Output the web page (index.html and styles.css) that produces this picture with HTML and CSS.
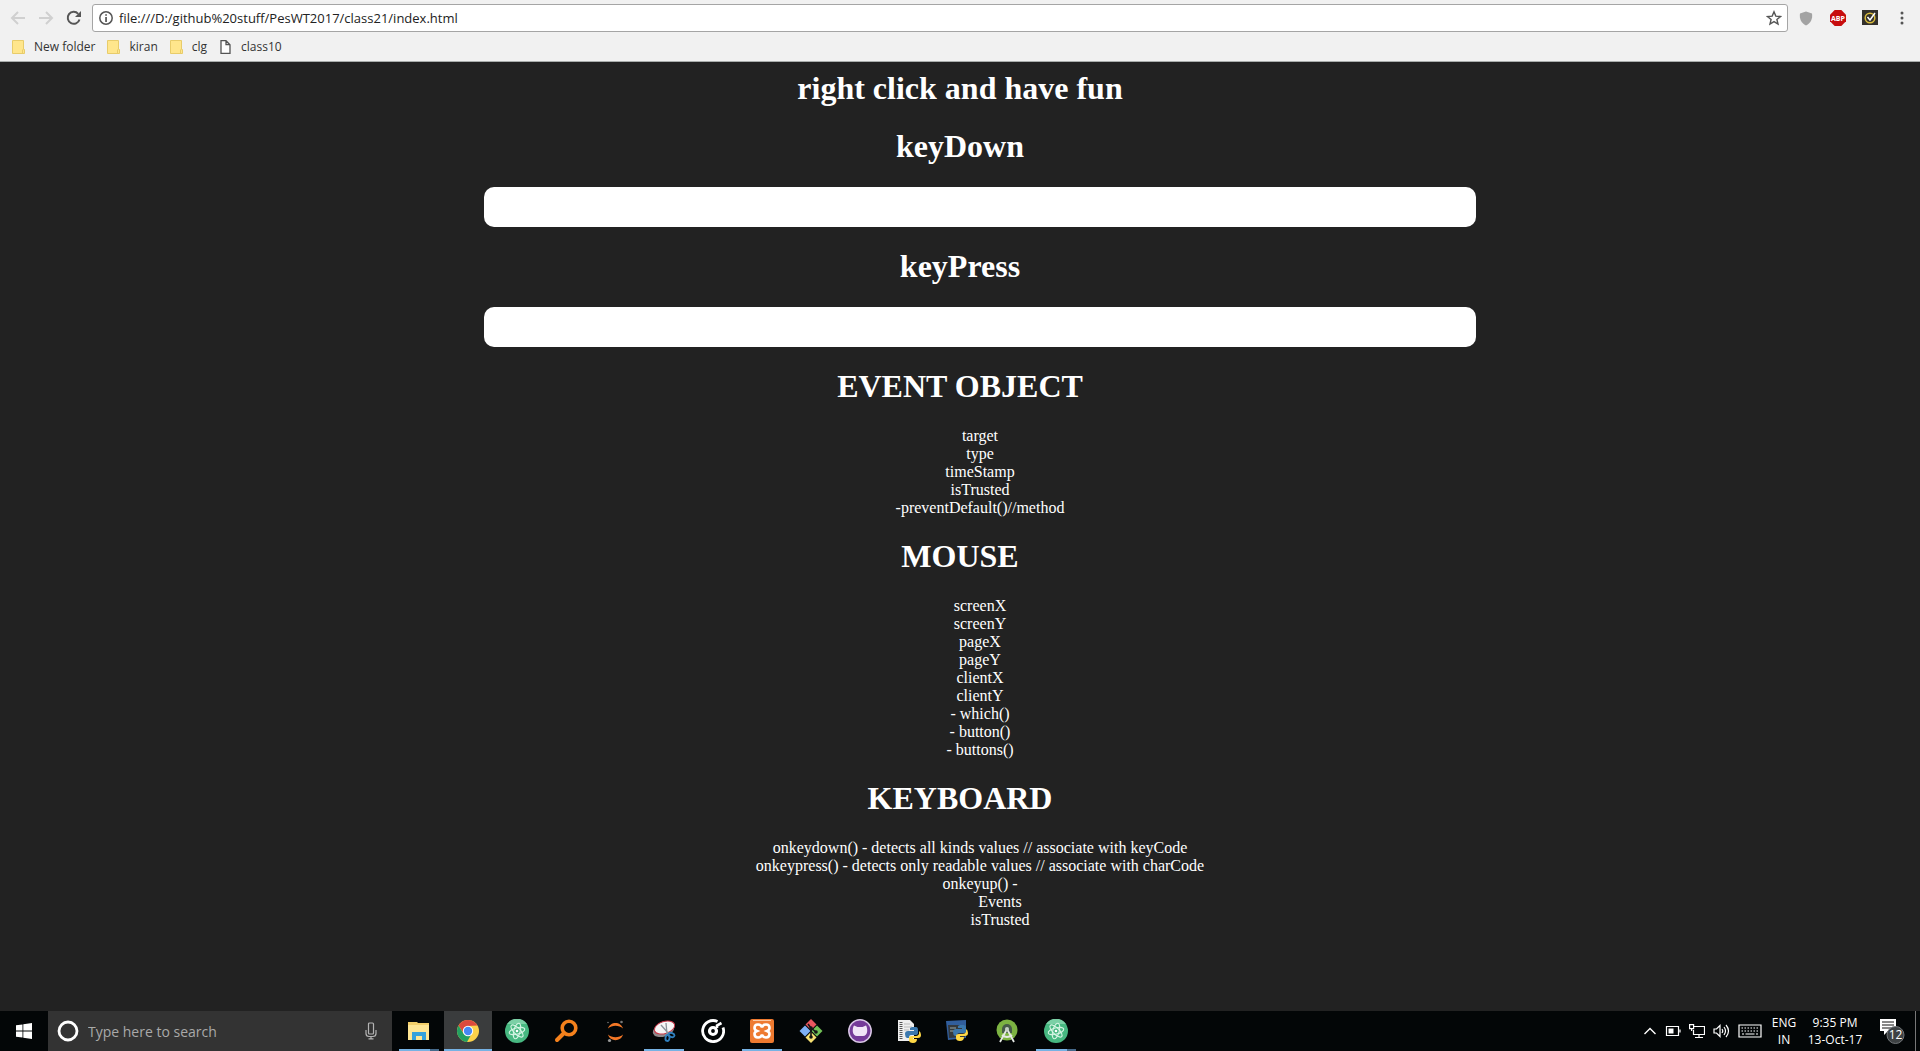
FILE: index.html
```html
<!DOCTYPE html>
<html lang="en">
<head>
<meta charset="utf-8">
<title>class21</title>
<link rel="stylesheet" href="styles.css">
</head>
<body>
<header class="browser">
  <div class="toolbar">
    <button class="nav" aria-label="Back"><svg width="16" height="16" viewBox="0 0 16 16" fill="none" stroke="#d0d0d0" stroke-width="2"><path d="M15 8H3M8 2L2 8l6 6"/></svg></button>
    <button class="nav" aria-label="Forward"><svg width="16" height="16" viewBox="0 0 16 16" fill="none" stroke="#d0d0d0" stroke-width="2"><path d="M1 8h12M8 2l6 6-6 6"/></svg></button>
    <button class="nav" aria-label="Reload"><svg width="16" height="16" viewBox="0 0 16 16"><path d="M13.5 9.5A6 6 0 1 1 12.2 3.8" fill="none" stroke="#555" stroke-width="2"/><path d="M15 1v6H9z" fill="#555"/></svg></button>
    <div class="omnibox">
      <svg width="16" height="16" viewBox="0 0 16 16"><circle cx="8" cy="8" r="6.2" fill="none" stroke="#555" stroke-width="1.5"/><path d="M7.2 7h1.7v5H7.2zM7.2 4.2h1.7v1.6H7.2z" fill="#555"/></svg>
      <input class="url" type="text" aria-label="Address" value="file:///D:/github%20stuff/PesWT2017/class21/index.html">
      <button class="nav" aria-label="Bookmark this page"><svg width="16" height="16" viewBox="0 0 16 16"><path d="M8 1.8l1.8 4.3 4.7.4-3.6 3 1.1 4.6L8 11.600l-4 2.500 1.100-4.600-3.600-3 4.700-.4z" fill="none" stroke="#555" stroke-width="1.400"/></svg></button>
    </div>
    <div class="extensions">
      <button class="nav" aria-label="Shield"><svg width="16" height="16" viewBox="0 0 16 16"><path d="M8 1.500l6 2c.8 5-1 9.500-6 12C3 13 1.200 8.500 2 3.500z" fill="#a3a3a3"/></svg></button>
      <button class="nav" aria-label="Adblock Plus"><svg width="16" height="16" viewBox="0 0 16 16"><path d="M4.700 0h6.600L16 4.700v6.600L11.300 16H4.700L0 11.300V4.700z" fill="#c70d0e"/><text x="8" y="10.500" text-anchor="middle" class="abp">ABP</text></svg></button>
      <button class="nav" aria-label="Norton"><svg width="16" height="16" viewBox="0 0 16 16"><path fill="#33302b" d="M0 0h16v15H0z"/><circle cx="8" cy="8" r="4.800" fill="none" stroke="#d9bc3c" stroke-width="1.500"/><path d="M5.500 7l2.500 3 5-7" fill="none" stroke="#fff" stroke-width="1.500"/></svg></button>
      <button class="nav" aria-label="Menu"><svg width="16" height="16" viewBox="0 0 16 16" fill="#555"><circle cx="8" cy="3" r="1.500"/><circle cx="8" cy="8" r="1.500"/><circle cx="8" cy="13" r="1.500"/></svg></button>
    </div>
  </div>
  <nav class="bookmarks">
    <a href="#"><svg width="13" height="14" viewBox="0 0 13 14"><path d="M.5.500h11v9h1v4H.5z" fill="#ffe68c" stroke="#e8cc6a"/><path d="M10.500 13V9.500" stroke="#e8cc6a"/></svg>New folder</a>
    <a href="#"><svg width="13" height="14" viewBox="0 0 13 14"><path d="M.5.500h11v9h1v4H.5z" fill="#ffe68c" stroke="#e8cc6a"/><path d="M10.500 13V9.500" stroke="#e8cc6a"/></svg>kiran</a>
    <a href="#"><svg width="13" height="14" viewBox="0 0 13 14"><path d="M.5.500h11v9h1v4H.5z" fill="#ffe68c" stroke="#e8cc6a"/><path d="M10.500 13V9.500" stroke="#e8cc6a"/></svg>clg</a>
    <a href="#"><svg width="13" height="14" viewBox="0 0 13 14"><path d="M2 .7h5l4 4v8.600H2zM7 .7v4h4" fill="#fff" stroke="#555" stroke-width="1.300"/></svg>class10</a>
  </nav>
</header>

<main class="page">
  <h1>right click and have fun</h1>
  <h1><label for="down">keyDown</label></h1>
  <div class="field"><input id="down" type="text"></div>
  <h1><label for="press">keyPress</label></h1>
  <div class="field"><input id="press" type="text"></div>
  <h1>EVENT OBJECT</h1>
  <ul>
    <li>target</li>
    <li>type</li>
    <li>timeStamp</li>
    <li>isTrusted</li>
    <li>-preventDefault()//method</li>
  </ul>
  <h1>MOUSE</h1>
  <ul>
    <li>screenX</li>
    <li>screenY</li>
    <li>pageX</li>
    <li>pageY</li>
    <li>clientX</li>
    <li>clientY</li>
    <li>- which()</li>
    <li>- button()</li>
    <li>- buttons()</li>
  </ul>
  <h1>KEYBOARD</h1>
  <ul>
    <li>onkeydown() - detects all kinds values // associate with keyCode</li>
    <li>onkeypress() - detects only readable values // associate with charCode</li>
    <li>onkeyup() -
      <ul>
        <li>Events</li>
        <li>isTrusted</li>
      </ul>
    </li>
  </ul>
</main>

<footer class="taskbar">
  <button class="start" aria-label="Start"><svg width="16" height="16" viewBox="0 0 16 16" fill="#fff"><path d="M0 2.300L6.500 1.400v6.200H0zM7.300 1.300L16 0v7.600H7.300zM0 8.400h6.500v6.200L0 13.700zM7.300 8.400H16V16l-8.700-1.300z"/></svg></button>
  <div class="search">
    <svg width="22" height="22" viewBox="0 0 22 22"><circle cx="11" cy="11" r="9" fill="none" stroke="#fff" stroke-width="2.800"/></svg>
    <input type="text" aria-label="Search" placeholder="Type here to search">
    <svg width="12" height="18" viewBox="0 0 12 18" fill="none" stroke="#b4b4b4" stroke-width="1.200"><rect x="3.500" y="1" width="5" height="11" rx="1"/><path d="M1 8v3.500a3 3 0 0 0 3 3h4a3 3 0 0 0 3-3V8M6 14.500v2.500M3.500 16.800h5"/></svg>
  </div>
  <div class="apps">
    <button class="app open more" aria-label="File Explorer"><svg width="24" height="24" viewBox="0 0 24 24"><path d="M1 3h9l1 1h11v17H1z" fill="#f3cf6a"/><path d="M1 6h21v15H1z" fill="#ffe694"/><path d="M5 13h14v8h-4v-4H9v4H5z" fill="#35a1dc"/></svg></button>
    <button class="app active" aria-label="Chrome"><svg width="24" height="24" viewBox="0 0 24 24"><circle cx="12" cy="12" r="11" fill="#fbd14b"/><path d="M2.500 6.500a11 11 0 0 1 19 0L12 7l-4.500 7z" fill="#dc4a3d"/><path d="M2.500 6.500A11 11 0 0 0 11 23l4.500-8L12 17l-4.500-2.500z" fill="#23a061"/><circle cx="12" cy="12" r="5.200" fill="#fff"/><circle cx="12" cy="12" r="4.200" fill="#4688f4"/></svg></button>
    <button class="app" aria-label="Atom"><svg width="24" height="24" viewBox="0 0 24 24"><circle cx="12" cy="12" r="12" fill="#47b881"/><path d="M2 5a12 12 0 0 1 20 0z" fill="#7bd0a6"/><g fill="none" stroke="#d7f5e5" stroke-width="1.100"><ellipse cx="12" cy="12" rx="8" ry="3.200" transform="rotate(-15 12 12)"/><ellipse cx="12" cy="12" rx="8" ry="3.200" transform="rotate(45 12 12)"/><ellipse cx="12" cy="12" rx="8" ry="3.200" transform="rotate(105 12 12)"/></g><circle cx="12" cy="12" r="1.300" fill="#fff"/></svg></button>
    <button class="app" aria-label="Search tool"><svg width="24" height="24" viewBox="0 0 24 24" fill="none" stroke="#f5811c"><circle cx="15" cy="9" r="6.800" stroke-width="3.600"/><path d="M10 14l-7 7" stroke-width="4" stroke-linecap="round"/></svg></button>
    <button class="app" aria-label="Jupyter"><svg width="24" height="24" viewBox="0 0 24 24"><path d="M5 9.500C7 2 18 2 20 9.500 16 5.800 9 5.800 5 9.500zM5 15.500c2 7.500 13 7.500 15 0-4 3.700-11 3.700-15 0z" fill="#f37726"/><circle cx="18.500" cy="3" r="1.300" fill="#777"/><circle cx="5" cy="3.500" r=".8" fill="#777"/><circle cx="6.500" cy="21.500" r="1.600" fill="#999"/></svg></button>
    <button class="app open" aria-label="Snipping Tool"><svg width="24" height="24" viewBox="0 0 24 24"><ellipse cx="11.500" cy="11" rx="11" ry="6.500" fill="#8f8a8c" transform="rotate(-18 11.500 11)"/><ellipse cx="12.500" cy="8.500" rx="10.500" ry="6" fill="#f6f6f6" stroke="#c9384a" transform="rotate(-18 12.500 8.500)"/><path d="M9 6l8 9M14 4l1 11" stroke="#8b9299" stroke-width="1.300"/><g fill="none" stroke="#2f7fbe" stroke-width="1.800"><ellipse cx="19.500" cy="16" rx="3" ry="2" transform="rotate(20 19.500 16)"/><ellipse cx="15.500" cy="19" rx="2" ry="3" transform="rotate(10 15.500 19)"/></g></svg></button>
    <button class="app" aria-label="Groove Music"><svg width="24" height="24" viewBox="0 0 24 24" fill="none" stroke="#fff"><path d="M16.500 2.500A10.500 10.500 0 1 0 22 8.500" stroke-width="2.800"/><circle cx="12" cy="12" r="3.500" stroke-width="3.200"/><path d="M16 9V6.500L20.500 4" stroke-width="2.600"/></svg></button>
    <button class="app open" aria-label="XAMPP"><svg width="24" height="24" viewBox="0 0 24 24"><rect width="24" height="24" rx="2" fill="#ee7a30"/><path d="M3 1h18v1H3z" fill="#fbc9a3"/><path d="M12 8.500C13 4.500 19.500 4.500 19.500 9q0 2-2.500 3 2.500 1 2.500 3c0 4.500-6.500 4.500-7.500.5-1 4-7.500 4-7.500-.5q0-2 2.500-3Q4.500 11 4.500 9c0-4.500 6.500-4.500 7.500-.5z" fill="none" stroke="#fff" stroke-width="2.600"/></svg></button>
    <button class="app" aria-label="Git"><svg width="24" height="24" viewBox="0 0 24 24"><path d="M12 0l5.500 5.500L12 11 6.500 5.500z" fill="#e8575f"/><path d="M6 6.500l5.500 5.500L6 17.500.500 12z" fill="#7eb0f5"/><path d="M18 6.500l5.500 5.500-5.500 5.500-5.500-5.500z" fill="#71c157"/><path d="M12 13l5.500 5.500L12 24l-5.500-5.500z" fill="#f7e072"/><path d="M9 5l3 4v9M12 9l5 4" stroke="#151515" stroke-width="1.600" fill="none"/><circle cx="12" cy="9" r="1.800" fill="#151515"/><circle cx="17" cy="13" r="1.800" fill="#151515"/><circle cx="12" cy="18" r="1.800" fill="#151515"/></svg></button>
    <button class="app" aria-label="GitHub Desktop"><svg width="24" height="24" viewBox="0 0 24 24"><circle cx="12" cy="12" r="11.200" fill="#753a99" stroke="#d9c6e6" stroke-width="1.500"/><path d="M6 6.500l3.500 1.500h5L18 6.500c2 3 2 10.500-3 10.500H9C4 17 4 9.500 6 6.500z" fill="#f1e4f7"/></svg></button>
    <button class="app" aria-label="Python file"><svg width="24" height="24" viewBox="0 0 24 24"><path d="M1 1h12l4 4v17H1z" fill="#eee"/><path d="M4 3v18" stroke="#555" stroke-width="3" stroke-dasharray="1 1"/><path d="M7 5h6M7 8h8M7 11h5" stroke="#bbb"/><path d="M15 8h4q2 0 2 3v3q0 2-3 2h-4q-2 0-2 3H10q-2-1-2-4t3-3h6v-1h-4V9z" fill="#3b78ad"/><path d="M22 12q2 1 2 4t-3 3h-5v1h4q0 4-4 4t-4-3v-2q0-2 3-2h4q2 0 3-2z" fill="#ffd845"/></svg></button>
    <button class="app" aria-label="IDLE"><svg width="24" height="24" viewBox="0 0 24 24"><path d="M0 2l20-1v18L2 21z" fill="#315e9c"/><path d="M2 6h17v12L3 19z" fill="#34393d"/><path d="M4 9h6M4 12h4" stroke="#9aa"/><path d="M14 6h4q2 0 2 3v3q0 2-3 2h-4q-2 0-2 3H9q-2-1-2-4t3-3h6V9h-4V7z" fill="#3b78ad"/><path d="M20 10q2 1 2 4t-3 3h-5v1h4q0 4-4 4t-4-3v-2q0-2 3-2h4q2 0 3-2z" fill="#ffd845"/></svg></button>
    <button class="app" aria-label="Android Studio"><svg width="24" height="24" viewBox="0 0 24 24"><circle cx="12" cy="11" r="10.500" fill="#7cb342"/><path d="M7 10a5 5 0 0 1 10 0v4H7z" fill="#465c48"/><path d="M12 10L5 23M12 10l7 13M7 16q5 4 10 0" fill="none" stroke="#e5e9e5" stroke-width="1.800"/><circle cx="12" cy="10" r="2" fill="#c5d0c5"/></svg></button>
    <button class="app open more" aria-label="Atom window"><svg width="24" height="24" viewBox="0 0 24 24"><circle cx="12" cy="12" r="12" fill="#47b881"/><path d="M2 5a12 12 0 0 1 20 0z" fill="#7bd0a6"/><g fill="none" stroke="#d7f5e5" stroke-width="1.100"><ellipse cx="12" cy="12" rx="8" ry="3.200" transform="rotate(-15 12 12)"/><ellipse cx="12" cy="12" rx="8" ry="3.200" transform="rotate(45 12 12)"/><ellipse cx="12" cy="12" rx="8" ry="3.200" transform="rotate(105 12 12)"/></g><circle cx="12" cy="12" r="1.300" fill="#fff"/></svg></button>
  </div>
  <div class="tray">
    <svg width="14" height="16" viewBox="0 0 14 16" fill="none" stroke="#fff" stroke-width="1.400"><path d="M1.500 11L7 5.500 12.500 11"/></svg>
    <svg width="16" height="16" viewBox="0 0 16 16"><path d="M1.500 3.500h12v9h-12zM15 6.500v3" fill="none" stroke="#fff" stroke-width="1.200"/><path d="M3.500 5.500h5v5h-5z" fill="#fff"/></svg>
    <svg width="16" height="16" viewBox="0 0 16 16" fill="none" stroke="#fff" stroke-width="1.200"><path d="M5 3.500h10.500v8H4.500V7M10 11.500V14M6 14.500h8M.6 1.600h4v4h-4zM2.600 5.600V8"/></svg>
    <svg width="17" height="16" viewBox="0 0 17 16" fill="none" stroke="#fff" stroke-width="1.200"><path d="M1 6h2.500L7 2.500v11L3.500 10H1zM9 6q1.500 2 0 4M11 4q3 4 0 8M13 2q5 6 0 12"/></svg>
    <svg width="24" height="16" viewBox="0 0 24 16" fill="none" stroke="#fff" stroke-width="1.200"><path d="M1 2h22v12H1z"/><path d="M3.500 5h17M3.500 8h17" stroke-dasharray="1.500 1.500"/><path d="M4 11h2M7.500 11h9M18 11h2"/></svg>
    <div class="stack lang"><span>ENG</span><span>IN</span></div>
    <div class="stack clock"><span>9:35 PM</span><span>13-Oct-17</span></div>
    <button class="notices" aria-label="Notifications"><svg width="26" height="26" viewBox="0 0 26 26"><path d="M1 1h16v12H9l-4 4v-4H1z" fill="#fff"/><path d="M3 4h12M3 7h12M3 10h9" stroke="#111"/><circle cx="16.500" cy="17" r="8.500" fill="#3d4143" stroke="#73777a"/><text x="16.500" y="21" text-anchor="middle" class="count">12</text></svg></button>
  </div>
</footer>
</body>
</html>
```
FILE: styles.css
```css
* {
  box-sizing: border-box;
}

body {
  display: flex;
  flex-direction: column;
  min-height: 100vh;
  margin: 0;
  background: #222;
  font-family: "Open Sans", sans-serif;
}

button {
  padding: 0;
  border: 0;
  background: none;
}

svg {
  display: block;
  flex: none;
}

/* browser bar */
.browser {
  height: 62px;
  padding: 4px 10px 0;
  border-bottom: 1px solid #a9adac;
  background: #f1f1f1;
  color: #222;
}

.toolbar {
  display: flex;
  align-items: center;
  gap: 12px;
}

.omnibox {
  display: flex;
  flex: 1;
  align-items: center;
  gap: 5px;
  height: 28px;
  margin-left: -2px;
  padding: 0 5px;
  border: 1px solid #a5a5a5;
  border-radius: 3px;
  background: #fff;
}

.url {
  flex: 1;
  padding: 0;
  border: 0;
  outline: 0;
  background: none;
  color: #222;
  font: 13px "Open Sans", sans-serif;
}

.extensions {
  display: flex;
  gap: 16px;
  margin-left: -2px;
}

.abp {
  fill: #fff;
  font: bold 7px "Open Sans", sans-serif;
}

.bookmarks {
  display: flex;
  gap: 12px;
  padding-left: 2px;
}

.bookmarks a {
  display: flex;
  align-items: center;
  gap: 9px;
  height: 29px;
  color: #333;
  font-size: 12px;
  text-decoration: none;
}

/* web page */
.page {
  flex: 1;
  padding: 9px 8px 8px;
  color: #fff;
  font: 16px/18px "Liberation Serif", serif;
  text-align: center;
}

h1 {
  margin: 0 0 24px;
  font-size: 32px;
  line-height: 34px;
}

ul {
  margin: 0 0 22px;
  padding: 0 0 0 40px;
  list-style: none;
}

ul ul {
  margin: 0;
}

.field {
  display: flex;
  justify-content: center;
  margin-bottom: 22px;
  padding-left: 40px;
}

.field input {
  box-sizing: content-box;
  width: 50%;
  height: 40px;
  padding: 0 30px;
  border: 0;
  border-radius: 10px;
  background: #fff;
}

/* taskbar */
.taskbar {
  display: flex;
  height: 40px;
  background: #030607;
  color: #fff;
}

.start {
  display: grid;
  place-items: center;
  width: 48px;
}

.search {
  display: flex;
  align-items: center;
  gap: 9px;
  width: 344px;
  padding: 0 15px 0 9px;
  background: #333;
}

.search input {
  flex: 1;
  min-width: 0;
  padding: 0;
  border: 0;
  background: none;
  font: 14px "Open Sans", sans-serif;
}

.search input::placeholder {
  color: #a9a9a9;
}

.apps {
  display: flex;
  gap: 1px;
  margin-left: 3px;
}

.app {
  display: grid;
  place-items: center;
  width: 48px;
  background: bottom / 40px 2px no-repeat;
}

.open {
  background-image: linear-gradient(#76b2e4, #76b2e4);
}

.more {
  background-image: linear-gradient(90deg, #76b2e4 31px, #45698a 31px);
}

.active {
  background: linear-gradient(#76b2e4, #76b2e4) bottom / 100% 2px no-repeat #3a3c3d;
}

.tray {
  display: flex;
  align-items: center;
  gap: 8px;
  margin-left: auto;
  margin-right: 4px;
  border-right: 1px solid #777;
}

.stack {
  display: grid;
  font-size: 12px;
  line-height: 17px;
  text-align: center;
}

.lang {
  width: 28px;
}

.clock {
  width: 58px;
}

.notices {
  margin: 0 10px 0 7px;
}

.count {
  fill: #fff;
  font: 12px "Open Sans", sans-serif;
}
```
